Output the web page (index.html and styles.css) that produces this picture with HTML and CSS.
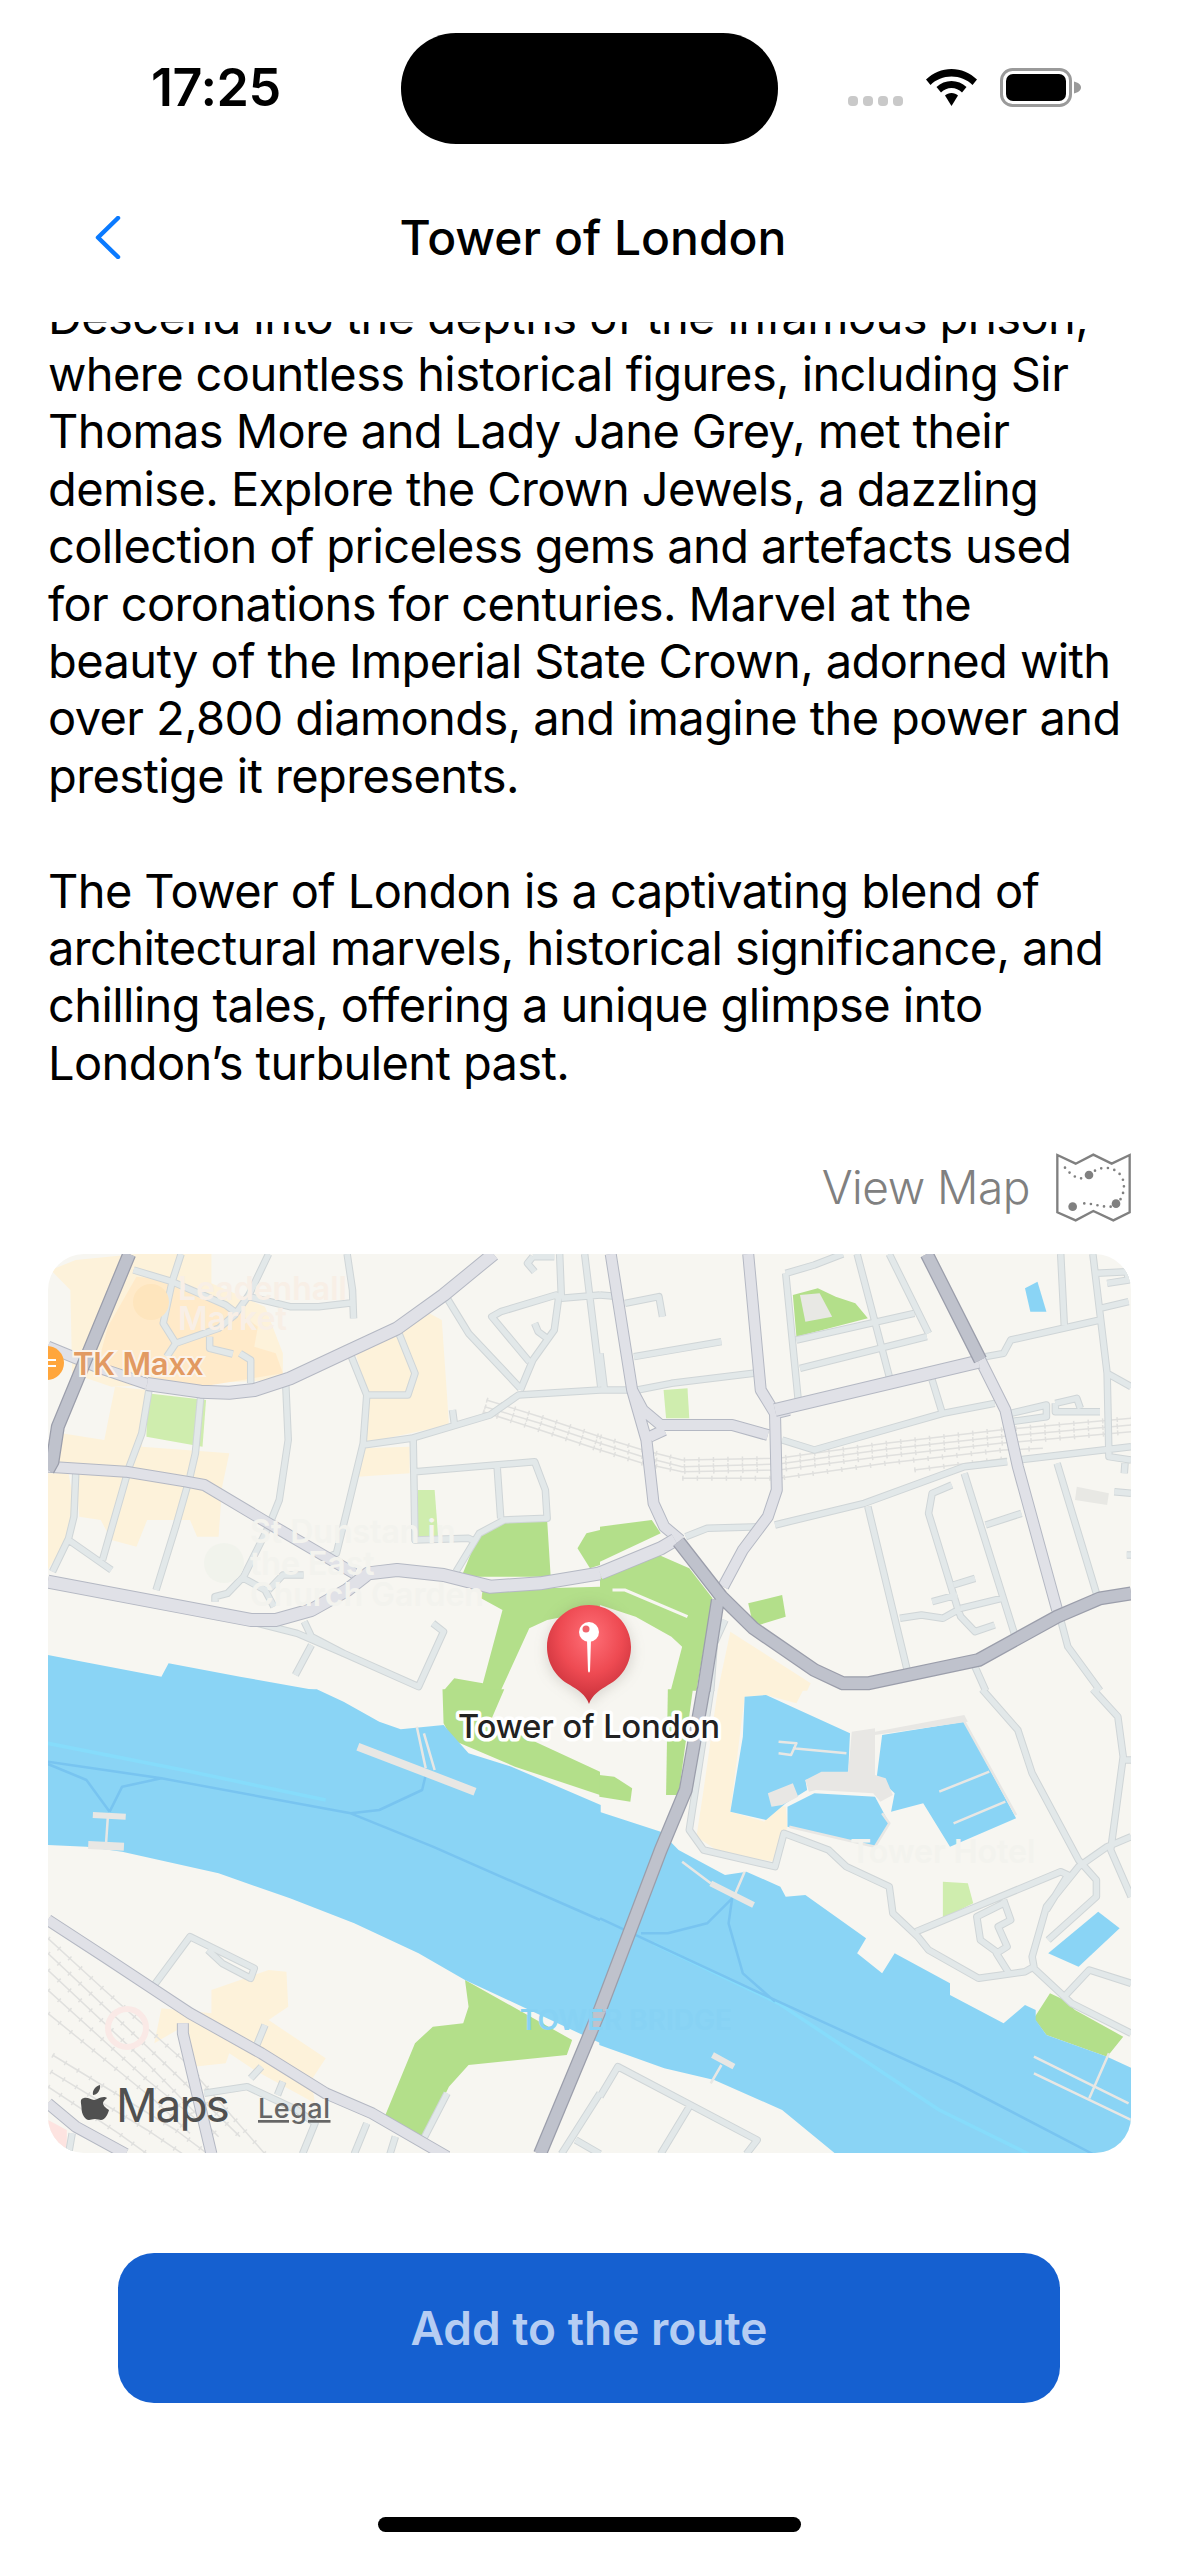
FILE: index.html
```html
<!DOCTYPE html>
<html lang="en">
<head>
<meta charset="utf-8">
<title>Tower of London</title>
<link rel="stylesheet" href="styles.css">
</head>
<body>
<div class="screen">
  <header class="statusbar">
    <div class="time">17:25</div>
    <div class="island"></div>
    <div class="status-icons">
      <div class="signal"><i></i><i></i><i></i><i></i></div>
      <svg class="wifi" viewBox="0 0 51 37"><path d="M25.5 0C35 0 44 4 51 10.5L46.5 16C41 10.5 33.5 7.5 25.5 7.5S10 10.5 4.500 16L0 10.500C7 4 16 0 25.5 0Z"/><path d="M25.5 12C31 12 36.500 14 40.500 18L36 23.500C33 20.500 29.500 19 25.500 19S18 20.500 15 23.500L10.500 18C14.500 14 20 12 25.500 12Z"/><path d="M25.5 24C28 24 30.500 25 32 26.500L25.500 37L19 26.500C20.500 25 23 24 25.500 24Z"/></svg>
      <svg class="battery" viewBox="0 0 82 39"><rect x="1.500" y="1.500" width="69" height="36" rx="11" class="batt-shell"/><rect x="6" y="6" width="60" height="27" rx="7"/><path d="M74 13.500C78 14.500 81 16.500 81 19.500S78 24.500 74 25.500Z" class="batt-cap"/></svg>
    </div>
  </header>

  <nav class="navbar">
    <svg class="back" viewBox="0 0 26 43"><path d="M23 2L3 21.500L23 41"/></svg>
    <h1 class="title">Tower of London</h1>
    <span></span>
  </nav>

  <main class="scroll">
    <div class="article">
      <p>Descend into the depths of the infamous prison,<br>where countless historical figures, including Sir<br>Thomas More and Lady Jane Grey, met their<br>demise. Explore the Crown Jewels, a dazzling<br>collection of priceless gems and artefacts used<br>for coronations for centuries. Marvel at the<br>beauty of the Imperial State Crown, adorned with<br>over 2,800 diamonds, and imagine the power and<br>prestige it represents.</p>
      <p>The Tower of London is a captivating blend of<br>architectural marvels, historical significance, and<br>chilling tales, offering a unique glimpse into<br>London’s turbulent past.</p>
    </div>

    <div class="viewmap">
      <span>View Map</span>
      <svg class="viewmap-icon" viewBox="828 100 225 205">
        <path class="vm-frame" d="M832 105L887 131L940 104L995 131L1049 105V277L1000 301L940 273L887 301L832 277Z"/>
        <path class="vm-route" d="M855 143C870 160 885 178 915 175M945 152C975 135 1010 145 1025 170C1038 195 1030 225 1020 240M992 260C960 262 930 245 895 252"/>
        <circle cx="927" cy="165" r="13"/><circle cx="878" cy="260" r="13"/><circle cx="1008" cy="251" r="13"/>
      </svg>
    </div>

    <div class="map">
      <svg class="map-svg" viewBox="48 1254 1083 899">
        <defs>
          <g id="r-minor">
            <g class="q1"><path d="M262 90L370 125L520 195L545 215M395 42L370 125L345 250L380 310L355 350M640 42L585 165L545 225L500 265L380 310M585 170L700 200L780 200L875 188M860 42L875 150L878 235M475 290L475 325L540 342M560 340L590 360L590 430M305 450L285 580L250 680L175 960M450 470L435 640L420 710L380 860L325 1050M688 430L695 600L670 780L640 860L570 1010L525 1060L490 1070L490 1085M870 345L915 465L905 610L860 810L830 940L810 950M915 465L1030 465L1050 400L1005 280M100 700L95 830L80 895L35 995M80 900L200 990M570 1015L630 1050L655 1100M640 1050L680 1005L738 1005M905 615L1040 595L1260 525L1340 465L1568 450M1155 510L1160 550M1045 600L1050 900L1200 895L1220 905M1050 695L1385 665L1415 750L1420 835L1300 840L1230 880L1165 995M1280 680L1290 835M1140 175L1200 280L1345 445M1345 450L1380 360L1440 270L1452 175L1445 165L1290 215L1265 230L1370 365M1385 250L1395 275L1420 295M1455 42L1460 175M1460 175L1568 165M1525 42L1570 440M1380 50L1365 70L1385 95M1380 50L1440 50M610 1150L720 1180L850 1240L1060 1340L1130 1175L1100 1150M740 1145L760 1190L850 1240M760 1215L715 1305"/></g>
            <g class="q2"><path d="M0 165L60 170M0 340L12 445M70 190L165 170L175 230M95 350L340 305M0 450L90 450M105 450L200 430L430 400M520 100L555 480M520 100L600 75L680 42M720 42L810 410M810 42L920 280M550 300L880 220M560 385L915 290M930 420L960 525M510 600L600 630L960 520L1105 490M1150 520L1250 495L1250 530L1150 545M1275 490L1275 515L1400 515M1275 490L1335 475L1345 505M1290 42L1300 255M1380 42L1420 400L1425 650L1487 660M1390 100L1475 95L1480 120L1420 130M1400 205L1480 185M1420 400L1487 440M1170 660L1487 620M490 855L740 790L1020 680L1140 665M240 890L300 865L450 860M750 800L860 1290M1020 700L1160 1180M1080 855L1180 820M985 735L930 760L920 820L1000 1100L1010 1130L1050 1175L1105 1155M990 1035L1050 1015M930 1085L1000 1065M1010 1105L1125 1075M840 1135L900 1125L960 1135L1010 1105M1280 670L1390 1060M1440 755L1487 760M1470 670L1468 700M1475 945L1487 945M1080 350L1130 340L1150 300L1400 240M1285 1120L1310 1220L1400 1352M1050 1280L1080 1352M350 1140L320 1210L310 1352"/></g>
            <g class="q4"><path d="M310 -2L250 420L290 480L490 530L515 430L640 480L690 530L810 590L820 670L890 740L920 780L1060 865L1190 845L1215 830L1210 800L1250 650L1340 530L1420 470L1487 440M1070 -2L1170 120L1210 250L1340 510L1390 570L1390 620L1255 750M1380 -2L1450 80L1465 200L1430 480L1487 620M1465 210L1487 210M885 725L1290 545L1310 555L1250 660M1130 630L1150 690L1115 710L1140 770L1110 790L1145 850M1130 640L1055 680L1065 750L1110 785M1210 830L1320 940L1487 1030M1300 920L1370 840L1487 880M0 1220L50 1130L440 1350L410 1392M250 1250L170 1392"/></g>
            <g class="q3"><path d="M320 885L420 740L600 835L590 865L510 820L470 780M630 1005L605 1070M620 1130L590 1165M680 1175L665 1215M460 1210L580 1190L720 1260L770 1300L735 1392M915 1300L880 1392M995 1340L980 1392M1140 1210L1075 1345M90 1330L80 1392M1568 1210L1460 1392M1500 1350L1568 1392"/></g>
          </g>
          <g id="r-mid">
            <g class="q1"><path d="M22 680L240 695L410 725L460 735L640 850L880 1000M22 320L170 385L300 432"/></g>
            <g class="q2"><path d="M30 42L90 450L130 600L150 790L180 860L225 900M90 450L120 510L170 555L370 555L470 585M415 42L450 450L490 520L495 750L470 830L400 930L345 1040M1065 360L1135 510L1170 680L1280 1110M140 590L180 570M490 520L530 510"/></g>
            <g class="q3"><path d="M22 690L180 800L420 970L620 1090L800 1210L930 1270L1140 1400M22 1240L100 1310L240 1392M400 1000L400 1030L480 1392"/></g>
          </g>
          <g id="r-wide">
            <g class="q1"><path d="M300 432L450 455L530 458L600 450L700 415L860 335L1000 265L1130 165L1270 42M22 1025L590 1140L660 1140L760 1110L860 1050L920 1000L1000 990L1130 1005L1260 1040L1400 1030L1568 1000"/></g>
            <g class="q2"><path d="M0 1000L170 925L210 900M490 510L1060 365"/></g>
          </g>
          <g id="r-high">
            <g class="q1"><path d="M250 42L50 560L35 665L22 690"/></g>
            <g class="q2"><path d="M915 42L1065 360M1487 1060L1400 1075L1280 1130L1060 1260L750 1330L680 1330L600 1290L430 1165L340 1070L220 905M330 1080L290 1352"/></g>
            <g class="q4"><path d="M290 -2L240 300L170 480L0 960"/></g>
            <g class="q3"><path d="M1568 960L1400 1392"/></g>
          </g>
          <g id="rail">
            <g class="q1"><path d="M1250 480L1400 530L1568 590M1245 500L1400 550L1568 610M1240 515L1400 570L1568 630"/></g>
            <g class="q2"><path d="M0 590L120 630L230 660L500 655L800 610L1120 570L1487 535M0 610L120 650L230 680L500 672L800 628L1120 590L1487 555M0 630L120 670L230 695L500 690L800 648L1120 610L1487 575M230 715L500 715L800 670L1130 630L1240 625M880 690L1140 655"/></g>
            <g class="q3"><path d="M22 745L180 900L400 1110L630 1392M22 790L300 1070L560 1340M22 840L300 1120L500 1340M22 900L300 1170L440 1290M22 970L320 1230L420 1330M35 1095L380 1320L470 1392M30 1145L300 1320L400 1392M22 1190L220 1330L300 1392"/></g>
          </g>
        </defs>

        <rect class="land" x="48" y="1254" width="1083" height="899"/>

        <g class="cream">
          <g class="q1"><path d="M30 90L100 60L270 42L480 42L480 130L630 200L680 340L680 420L200 440L90 400L85 150Z"/><path d="M60 580L180 600L210 440L300 450L285 620L530 640L510 740L500 890L440 890L420 840L300 840L270 920L200 900L170 840L110 830L100 700L50 660Z"/><path d="M22 700L80 700L100 820L80 890L22 990Z"/><path d="M885 345L1000 280L1090 220L1125 240L1140 470L1145 555L905 610L920 470Z"/><path d="M895 625L1035 620L1035 700L890 710Z"/></g>
          <g class="q2"><path d="M365 1175L590 1330L580 1352L330 1352Z"/></g>
          <g class="q4"><path d="M330 -2L570 -2L550 40L465 15L405 20L365 365L460 395L490 345L520 350L525 410L490 515L340 490L270 440L290 300Z"/></g>
          <g class="q3"><path d="M480 900L640 840L690 845L695 950L640 990L800 1105L760 1170L770 1240L600 1140L530 1090L520 1120L430 1130L400 1010L320 1060L340 955L480 970Z"/></g>
        </g>
        <g class="orange"><g class="q1"><path d="M190 260L270 110L360 120L520 190L610 260L600 320L660 340L680 400L450 440L160 380Z"/></g></g>
        <g class="pink"><g class="q3"><path d="M22 1290L75 1320L75 1392L22 1392Z"/></g></g>

        <g class="park-light">
          <g class="q1"><path d="M300 460L465 480L455 620L298 590Z"/><path d="M1058 750L1105 750L1115 890L1055 890Z"/></g>
          <g class="q2"><path d="M178 450L245 445L250 535L185 535Z"/></g>
          <g class="q4"><path d="M960 575L1030 580L1045 640L960 685Z"/></g>
        </g>
        <g class="park">
          <g class="q1"><path d="M1265 850L1420 840L1430 1010L1180 1010L1230 880Z"/><path d="M1568 870L1530 880L1505 925L1540 985L1568 975Z"/><path d="M1240 1050L1568 1040L1568 1110L1420 1140L1370 1165L1290 1352L1130 1352L1160 1315L1240 1330L1295 1110L1235 1075Z"/></g>
          <g class="q2"><path d="M0 860L145 840L170 880L0 965Z"/><path d="M0 1015L165 945L250 985L315 1075L270 1352L198 1352L230 1220L200 1190L100 1130L0 1095Z"/><path d="M540 165L610 145L660 170L715 190L750 235L550 290Z"/><path d="M415 1090L510 1065L520 1130L430 1160Z"/></g>
          <g class="q3"><path d="M1127 -2L1300 -2L1265 85L1335 130L1568 245L1568 315L1330 230L1155 150L1130 100Z"/><path d="M1190 870L1490 1050L1475 1095L1200 1125L1145 1190L1075 1345L965 1280L1050 1060L1100 1010L1185 1000L1200 950Z"/></g>
          <g class="q4"><path d="M190 -2L260 -2L220 315L185 315Z"/><path d="M-2 255L40 260L90 295L85 335L-2 320Z"/><path d="M1260 910L1300 930L1330 960L1465 1040L1420 1100L1250 1035L1215 985Z"/></g>
        </g>
        <g class="building">
          <g class="q2"><path d="M560 165L615 160L650 230L575 245Z"/></g>
          <g class="q2"><path d="M1335 740L1425 760L1420 795L1330 780Z"/></g>
        </g>
        <g class="fort-path"><g class="q2"><path d="M35 1050L70 1050L245 1130"/></g></g>

        <g class="water">
          <g class="q1"><path d="M22 1245L120 1265L340 1310L360 1270L560 1310L780 1352L22 1352Z"/></g>
          <g class="q2"><path d="M1190 145L1225 125L1250 215L1205 215Z"/></g>
          <g class="q3"><path d="M22 -2L775 -2L850 35L950 95L1010 118L1130 105L1200 190L1320 230L1570 345L1570 1060L1190 870L1060 790L880 700L700 625L500 550L230 485L130 470L22 465Z"/></g>
          <g class="q4"><path d="M-2 365L170 425L220 480L350 555L410 545L505 590L520 620L575 615L745 745L720 790L790 850L825 790L980 880L980 915L1130 1000L1190 945L1220 960L1220 990L1250 1035L1420 1100L1490 1135L1490 1392L660 1392L510 1260L320 1170L180 1135L-2 1065Z"/><path d="M405 20L465 15L700 130L695 245L575 270L580 300L520 340L465 390L365 365L400 140Z"/><path d="M790 135L1020 95L1165 385L980 470L905 340L815 365L825 310L775 260Z"/><path d="M525 350L600 310L770 320L810 400L770 470L525 410Z"/><path d="M1395 665L1455 715L1340 830L1255 790Z"/></g>
        </g>
        <g class="channel-light">
          <g class="q3"><path d="M22 160L400 240L800 330"/></g>
          <g class="q4"><path d="M150 760L500 940L950 1260L1200 1392"/></g>
        </g>
        <g class="channel">
          <g class="q3"><path d="M22 215L340 265L870 370L1100 470L1568 690M22 222L130 270L195 365M195 365L230 290L340 265M870 370L950 360L1070 300L1080 255"/></g>
          <g class="q4"><path d="M0 685L120 745L500 935L1000 1180L1380 1392M115 730L190 730L300 700L370 625L360 700L400 850L490 935"/></g>
        </g>

        <g class="pier-fill">
          <g class="q4"><path d="M705 125L770 115L770 255L800 265L820 315L785 335L765 310L605 300L585 305L575 270L620 245L695 245Z"/><path d="M770 125L1020 75L1030 95L770 135Z"/><path d="M470 310L540 280L555 320L510 345L480 350Z"/></g>
        </g>
        <g class="pier p8"><g class="q3"><path d="M890 170L1218 305M135 465L235 470"/></g></g>
        <g class="pier p7"><g class="q4"><path d="M310 580L430 645M315 1095L375 1130"/></g><g class="q3"><path d="M148 375L240 380"/></g></g>
        <g class="pier p3"><g class="q3"><path d="M190 380L185 460M1055 110L1080 235M1075 130L1105 240"/></g><g class="q4"><path d="M230 515L310 580M950 305L1090 245M990 400L1135 335M1020 95L1165 375M1215 1100L1480 1240M1215 1150L1487 1290M1425 1090L1370 1225M340 1125L310 1180M405 545L375 620M500 155L550 160L535 195L500 190M540 175L690 190M530 410L770 470L810 400L790 370"/></g></g>

        <use href="#rail" class="rail-line"/>
        <use href="#rail" class="rail-tick"/>
        <use href="#r-minor" class="minor-case"/>
        <use href="#r-minor" class="minor-fill"/>
        <use href="#r-mid" class="mid-case"/>
        <use href="#r-mid" class="mid-fill"/>
        <use href="#r-wide" class="wide-case"/>
        <use href="#r-wide" class="wide-fill"/>
        <use href="#r-high" class="high-case"/>
        <use href="#r-high" class="high-fill"/>

        <circle class="poi-faint-o" cx="151" cy="1302" r="18"/>
        <circle class="poi-faint-g" cx="224" cy="1563" r="20"/>
        <circle class="poi-faint-r" cx="127" cy="2028" r="19"/>
        <text class="faint faint-o"><tspan x="178" y="1300">Leadenhall</tspan><tspan x="178" y="1330">Market</tspan></text>
        <text class="faint faint-g"><tspan x="250" y="1543">St Dunstan in</tspan><tspan x="250" y="1575">the East</tspan><tspan x="250" y="1606">Church Garden</tspan></text>
        <text class="faint faint-g" x="850" y="1863">Tower Hotel</text>
        <text class="faint faint-w" x="732" y="2030">TOWER BRIDGE</text>

        <circle class="poi" cx="47" cy="1363" r="17"/>
        <path class="poi-mark" d="M48 1360H56M48 1366H56"/>
        <text class="tkmaxx" x="73" y="1375">TK Maxx</text>

        <path class="pin-shadow" d="M589 1704C582 1692 566 1686 556 1676C540 1660 546 1610 589 1605C632 1610 640 1660 622 1676C612 1686 596 1692 589 1704Z"/>
        <defs>
          <radialGradient id="pin-grad" cx="52%" cy="32%" r="68%">
            <stop offset="0" stop-color="#ff7078"/>
            <stop offset=".55" stop-color="#ee4a52"/>
            <stop offset="1" stop-color="#c42e38"/>
          </radialGradient>
        </defs>
        <path class="pin-body" d="M589 1704C586 1695 578 1690 570 1685C556 1678 547 1663 547 1647C547 1624 566 1605 589 1605S631 1624 631 1647C631 1663 622 1678 608 1685C600 1690 592 1695 589 1704Z"/>
        <path class="pin-needle" d="M587 1640H591L590 1671Q589 1674 588 1671Z"/>
        <circle class="pin-head" cx="589" cy="1632" r="10"/>
        <circle class="pin-dot" cx="586" cy="1629" r="3.500"/>
        <text class="pin-label" x="589" y="1738">Tower of London</text>

        <g class="apple-shift"><path class="apple" d="M101 2097C96 2097 94 2100 91 2100C88 2100 85 2097 81 2098C76 2099 78.500 2103 78.500 2108C78.500 2114 82 2120 86 2120C88 2120 89 2119 92 2119C95 2119 96 2120 98 2120C102 2120 105 2114 106 2110C102 2108 100 2105 100 2103.500C100 2101 103 2099 104 2098C103 2097 102 2097 101 2097ZM97 2085C93 2086 89 2090 90 2095C94 2095 98 2090 97 2085Z"/></g>
        <text class="maps-word" x="116" y="2122">Maps</text>
        <text class="legal" x="258" y="2118">Legal</text>
      </svg>
    </div>

    <button class="cta" type="button">Add to the route</button>
  </main>

  <div class="home-indicator"></div>
</div>
</body>
</html>
```

FILE: styles.css
```css
* { box-sizing: border-box; }
html, body { margin: 0; padding: 0; background: #fff; }
body { font-family: Inter, "Noto Sans", sans-serif; color: #000; }

.screen { width: 1179px; height: 2556px; display: flex; flex-direction: column; overflow: hidden; background: #fff; }

/* status bar */
.statusbar { height: 170px; flex: none; display: grid; grid-template-columns: 401px 377px 1fr; }
.time { padding: 62px 0 0 151px; font-size: 52px; line-height: 52px; font-weight: 600; letter-spacing: -.4px; }
.island { margin-top: 33px; height: 111px; border-radius: 55px; background: #000; }
.status-icons { display: flex; align-items: flex-start; gap: 23px; padding: 68px 0 0 70px; }
.signal { display: flex; gap: 5px; margin-top: 28px; }
.signal i { display: block; width: 10px; height: 10px; border-radius: 4px; background: #c9c9c9; }
.wifi { width: 51px; height: 37px; margin-top: 1px; }
.battery { width: 82px; height: 39px; }
.batt-shell { fill: none; stroke: #9a9a9a; stroke-width: 3; }
.batt-cap { fill: #9a9a9a; }

/* nav */
.navbar { height: 152px; flex: none; display: grid; grid-template-columns: 1fr auto 1fr; align-items: start; padding-left: 7px; padding-top: 46px; }
.back { width: 26px; height: 43px; margin: 0 0 0 88px; fill: none; stroke: #0a7aff; stroke-width: 4.500; stroke-linecap: round; stroke-linejoin: round; }
.title { margin: 0; font-size: 48px; line-height: 44px; font-weight: 500; letter-spacing: 0; }

/* content */
.scroll { flex: 1; min-height: 0; overflow: hidden; padding: 0 48px; display: flex; flex-direction: column; }
.article { margin-top: -34.500px; font-size: 47px; line-height: 57.400px; letter-spacing: -.6px; white-space: nowrap; }
.article p { margin: 0 0 57.400px; }
.article p:last-child { margin-bottom: 0; }

.viewmap { margin-top: 61.500px; display: flex; justify-content: flex-end; align-items: center; gap: 26px; color: #808080; font-size: 46px; line-height: 69px; font-weight: 300; letter-spacing: -.5px; }
.viewmap-icon { width: 75px; height: 69px; flex: none; fill: #808080; }
.vm-frame { fill: none; stroke: #808080; stroke-width: 7; stroke-linejoin: miter; }
.vm-route { fill: none; stroke: #808080; stroke-width: 8; stroke-linecap: round; stroke-dasharray: 0 20; }

.map { margin-top: 32px; height: 899px; flex: none; border-radius: 36px; overflow: hidden; }
.map-svg { display: block; width: 1083px; height: 899px; }

.q1 { transform: translate(40px, 1240px) scale(.35714, .33333); }
.q2 { transform: translate(600px, 1240px) scale(.35714, .33333); }
.q3 { transform: translate(40px, 1690px) scale(.35714, .33333); }
.q4 { transform: translate(600px, 1690px) scale(.35714, .33333); }

.land { fill: #f7f6f1; }
.cream { fill: #fdf2da; }
.orange { fill: #ffeac9; }
.pink { fill: #fde3e0; }
.park { fill: #b3df8a; }
.park-light { fill: #cfedae; }
.building { fill: #e8e8e4; }
.water { fill: #8ad4f5; }
.pier-fill { fill: #e8e7e4; }
.fort-path path { fill: none; stroke: #f7f6f1; stroke-width: 3; vector-effect: non-scaling-stroke; }

.channel path, .channel-light path, .pier path { fill: none; vector-effect: non-scaling-stroke; stroke-linejoin: round; }
.channel path { stroke: #78c4f0; stroke-width: 2.500; }
.channel-light path { stroke: #86dcfb; stroke-width: 3.500; }
.pier path { stroke: #e8e7e4; }
.p8 path { stroke-width: 8; }
.p7 path { stroke-width: 6; }
.p3 path { stroke-width: 2.500; }

#r-minor path, #r-mid path, #r-wide path, #r-high path, #rail path { fill: none; vector-effect: non-scaling-stroke; stroke-linejoin: round; }
.minor-case { stroke: #cfd5d7; stroke-width: 7.500; }
.minor-fill { stroke: #e2e8e9; stroke-width: 5.500; }
.mid-case { stroke: #b4b8c3; stroke-width: 12; }
.mid-fill { stroke: #e0e1e7; stroke-width: 10; }
.wide-case { stroke: #b4b8c3; stroke-width: 14; }
.wide-fill { stroke: #e0e1e7; stroke-width: 12; }
.high-case { stroke: #9b9eab; stroke-width: 14; }
.high-fill { stroke: #bfc2cc; stroke-width: 11.500; }
.rail-line { stroke: #e0e0de; stroke-width: 1.500; }
.rail-tick { stroke: #e0e0de; stroke-width: 5; stroke-dasharray: 1.500 13; }

.poi { fill: #ffa63c; }
.poi-mark { fill: none; stroke: #fff; stroke-width: 2; }
.tkmaxx { font-size: 31px; font-weight: 600; fill: #e29a62; stroke: #fbf3ea; stroke-width: 4px; paint-order: stroke; letter-spacing: -.2px; }
.faint { font-size: 32px; font-weight: 600; }
.faint-o { fill: #f8efe6; }
.faint-g { fill: #f3f3ee; }
.faint-w { fill: #87d2f4; text-anchor: end; font-size: 28px; }
.poi-faint-o { fill: #fee5bd; }
.poi-faint-g { fill: #f1f3ec; }
.poi-faint-r { fill: none; stroke: #fae9e6; stroke-width: 6; }

.pin-shadow { fill: rgba(90, 80, 70, .22); filter: blur(7px); }
.pin-body { fill: url(#pin-grad); }
.pin-needle, .pin-head { fill: #fff; }
.pin-dot { fill: #f0646c; }
.pin-label { font-size: 32.500px; font-weight: 500; fill: #222; stroke: #fff; stroke-width: 7px; stroke-linejoin: round; paint-order: stroke; text-anchor: middle; }

.apple-shift { transform: translateX(3px); }
.apple { fill: #505050; }
.maps-word { font-size: 46px; fill: #505050; letter-spacing: -2px; }
.legal { font-size: 27px; font-weight: 500; fill: #666; letter-spacing: .5px; text-decoration: underline; }

.cta { margin: 100px 71px 0 70px; height: 150px; flex: none; border: 0; border-radius: 36px; background: #1560d0; color: #b5cdf3; font-family: Inter, "Noto Sans", sans-serif; font-size: 46px; font-weight: 600; }

.home-indicator { flex: none; align-self: center; width: 423px; height: 15px; border-radius: 8px; background: #000; margin-top: 114px; margin-bottom: 24px; }
```
